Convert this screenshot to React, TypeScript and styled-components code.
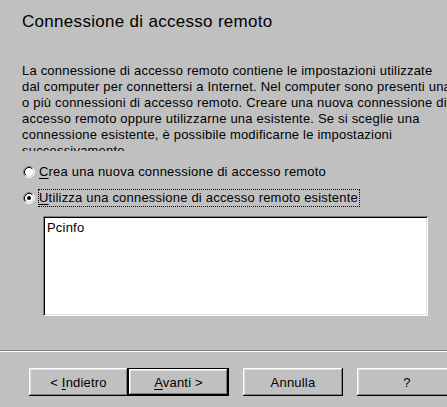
import React from 'react';
import styled, { createGlobalStyle } from 'styled-components';

const GlobalStyle = createGlobalStyle`
  html, body {
    margin: 0;
    padding: 0;
    background: #c0c0c0;
    overflow: hidden;
  }
`

const Dialog = styled.div`
  width: 447px;
  height: 407px;
  background: #c0c0c0;
  display: flex;
  flex-direction: column;
  overflow: hidden;
  font-family: "Liberation Sans", Arial, sans-serif;
  color: #000;
`

const Page = styled.section`
  display: flex;
  flex-direction: column;
  padding-left: 22px;
`

const Title = styled.h1`
  margin: 12px 0 0;
  font-size: 17px;
  font-weight: normal;
  line-height: 20px;
  letter-spacing: 0.3px;
  white-space: nowrap;
`

const Intro = styled.p`
  margin: 31px 0 0;
  height: 88px;
  overflow: hidden;
  font-size: 13px;
  line-height: 16px;
  letter-spacing: 0.2px;
  white-space: nowrap;
`

const RadioGroup = styled.div`
  display: flex;
  flex-direction: column;
  gap: 8px;
  margin-top: 12px;
  padding-left: 1px;
`

const RadioRow = styled.label`
  display: flex;
  align-items: center;
  gap: 3px;
  height: 18px;
`

const RadioText = styled.span<{ $focused?: boolean }>`
  font-size: 13px;
  line-height: 16px;
  letter-spacing: 0.2px;
  white-space: nowrap;
  padding-right: 1px;
  border: 1px dotted ${p => (p.$focused ? '#000' : 'transparent')};
`

const Key = styled.u`
  text-decoration: underline;
  text-underline-offset: 2px;
`

const ListBox = styled.div`
  margin: 9px 0 0 21px;
  width: 385px;
  height: 100px;
  box-sizing: border-box;
  background: #fff;
  padding: 4px;
  box-shadow: inset 1px 1px #808080, inset -1px -1px #fff, inset 2px 2px #000, inset -2px -2px #dfdfdf;
  font-size: 13px;
  line-height: 16px;
  letter-spacing: 0.2px;
`

const Separator = styled.hr`
  margin: 34px 0 0;
  height: 0;
  border: none;
  border-top: 1px solid #808080;
  border-bottom: 1px solid #fff;
`

const ButtonBar = styled.div`
  display: flex;
  margin-top: 16px;
  padding-left: 29px;
`

const Button = styled.button<{ $default?: boolean; $gap?: number; $w?: number }>`
  flex-shrink: 0;
  width: ${p => p.$w ?? 100}px;
  height: 28px;
  margin-left: ${p => p.$gap ?? 0}px;
  padding: 0;
  box-sizing: border-box;
  background: #c0c0c0;
  border: ${p => (p.$default ? '1px solid #000' : 'none')};
  box-shadow: inset -1px -1px #000, inset 1px 1px #fff, inset -2px -2px #808080, inset 2px 2px #dfdfdf;
  font-family: "Liberation Sans", Arial, sans-serif;
  font-size: 13px;
  letter-spacing: 0.2px;
  color: #000;
  display: flex;
  align-items: center;
  justify-content: center;
`

const Caption = styled.span`
  white-space: pre;
`

function Radio({ checked }: { checked?: boolean }) {
  return (
    <svg width="12" height="12" viewBox="0 0 12 12">
      <circle cx="6" cy="6" r="4.2" fill="#fff" />
      <path d="M2.11 9.89 A5.5 5.5 0 0 1 9.89 2.11" fill="none" stroke="#808080" />
      <path d="M9.89 2.11 A5.5 5.5 0 0 1 2.11 9.89" fill="none" stroke="#fff" />
      <path d="M2.82 9.18 A4.5 4.5 0 0 1 9.18 2.82" fill="none" stroke="#000" />
      <path d="M9.18 2.82 A4.5 4.5 0 0 1 2.82 9.18" fill="none" stroke="#dfdfdf" />
      {checked && <circle cx="6" cy="6" r="2" fill="#000" />}
    </svg>
  );
}

function App() {
  return (
    <>
      <GlobalStyle />
      <Dialog>
        <Page>
          <Title>Connessione di accesso remoto</Title>
          <Intro>
            La connessione di accesso remoto contiene le impostazioni utilizzate<br />
            dal computer per connettersi a Internet. Nel computer sono presenti una<br />
            o più connessioni di accesso remoto. Creare una nuova connessione di<br />
            accesso remoto oppure utilizzarne una esistente. Se si sceglie una<br />
            connessione esistente, è possibile modificarne le impostazioni<br />
            successivamente.
          </Intro>
          <RadioGroup>
            <RadioRow>
              <Radio />
              <RadioText><Key>C</Key>rea una nuova connessione di accesso remoto</RadioText>
            </RadioRow>
            <RadioRow>
              <Radio checked />
              <RadioText $focused><Key>U</Key>tilizza una connessione di accesso remoto esistente</RadioText>
            </RadioRow>
          </RadioGroup>
          <ListBox>Pcinfo</ListBox>
        </Page>
        <Separator />
        <ButtonBar>
          <Button $w={99}><Caption>{'< '}<Key>I</Key>ndietro</Caption></Button>
          <Button $default $w={101}><Caption><Key>A</Key>{'vanti >'}</Caption></Button>
          <Button $gap={14}><Caption>Annulla</Caption></Button>
          <Button $gap={14}><Caption>?</Caption></Button>
        </ButtonBar>
      </Dialog>
    </>
  );
}

export default App;
